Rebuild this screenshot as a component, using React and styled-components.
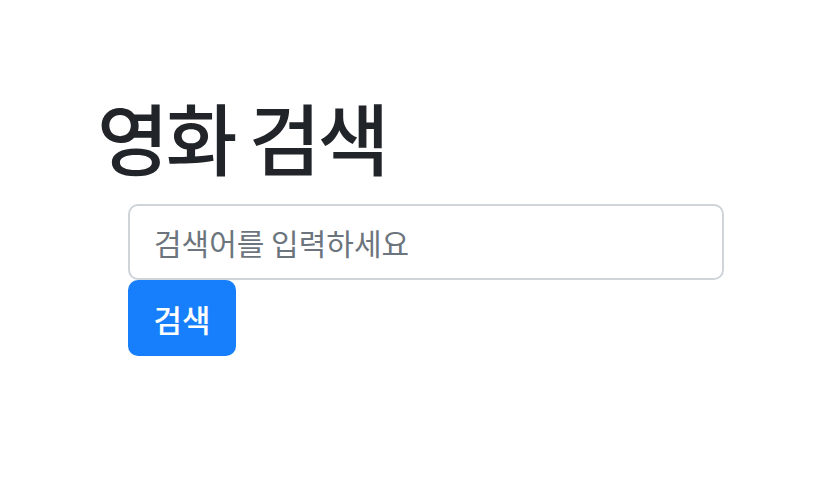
import styled, { createGlobalStyle } from 'styled-components'

const GlobalStyle = createGlobalStyle`
  body {
    margin: 0;
    background: #fff;
    font-family: "Noto Sans CJK KR", "Noto Sans", sans-serif;
  }
`

const Page = styled.div`
  padding: 88px 0 0 97px;
`

const Title = styled.h1`
  margin: 0 0 20px;
  font-size: 78px;
  font-weight: 500;
  line-height: 96px;
  color: #212529;
  letter-spacing: -3px;
`

const SearchForm = styled.form`
  display: flex;
  flex-direction: column;
  align-items: flex-start;
  padding-left: 31px;
`

const SearchInput = styled.input`
  box-sizing: border-box;
  width: 596px;
  height: 76px;
  padding: 0 24px;
  border: 2px solid #ced4da;
  border-radius: 10px;
  font-family: inherit;
  font-size: 30px;
  color: #212529;
  outline: none;

  &::placeholder {
    color: #6c757d;
  }
`

const SearchButton = styled.button`
  box-sizing: border-box;
  width: 108px;
  height: 76px;
  padding: 0;
  border: none;
  border-radius: 10px;
  background: #177ffc;
  color: #fff;
  font-family: inherit;
  font-size: 31px;
  font-weight: 500;
  cursor: pointer;
`

const App = () => {
  return (
    <>
      <GlobalStyle />
      <Page>
        <Title>영화 검색</Title>
        <SearchForm onSubmit={(e) => e.preventDefault()}>
          <SearchInput type='text' placeholder='검색어를 입력하세요' />
          <SearchButton type='submit'>검색</SearchButton>
        </SearchForm>
      </Page>
    </>
  )
}

export default App
